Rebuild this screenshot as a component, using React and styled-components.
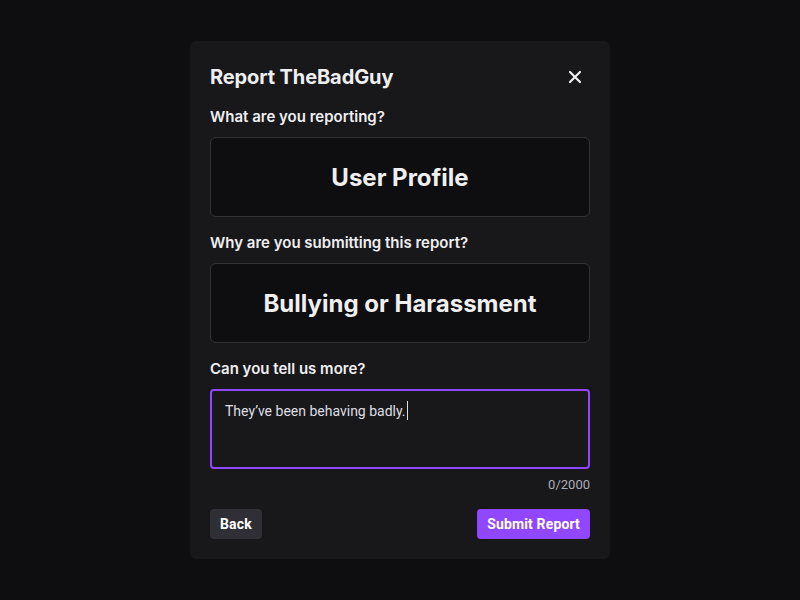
import React from "react";
import styled, { createGlobalStyle } from "styled-components";

const Global = createGlobalStyle`
  html, body { margin: 0; padding: 0; background: #0e0e10; }
  body { font-family: Inter, "Noto Sans", sans-serif; color: #efeff1; }
  * { box-sizing: border-box; }
`;

const Page = styled.div`
  width: 800px;
  height: 600px;
  display: flex;
  justify-content: center;
  align-items: flex-start;
  padding-top: 41px;
`;

const Modal = styled.div`
  width: 420px;
  background: #18181b;
  border-radius: 6px;
  padding: 20px;
  display: flex;
  flex-direction: column;
`;

const Header = styled.div`
  display: flex;
  align-items: center;
  justify-content: space-between;
  height: 31px;
  padding-top: 1px;
  margin-bottom: 14px;
`;

const Title = styled.h2`
  margin: 0;
  font-size: 20px;
  font-weight: 700;
  letter-spacing: -0.1px;
  color: #efeff1;
`;

const Close = styled.button`
  width: 30px;
  height: 30px;
  border: none;
  background: transparent;
  color: #efeff1;
  display: flex;
  align-items: center;
  justify-content: center;
  padding: 0;
`;

const Label = styled.div`
  font-size: 15px;
  font-weight: 600;
  line-height: 20px;
  padding-top: 1px;
  margin-bottom: 10px;
  color: #efeff1;
`;

const Choice = styled.div`
  flex-shrink: 0;
  height: 80px;
  background: #0e0e10;
  border: 1px solid #323237;
  border-radius: 6px;
  display: flex;
  align-items: center;
  justify-content: center;
  font-size: 24px;
  font-weight: 700;
  color: #efeff1;
  margin-bottom: 15px;
`;

const TextArea = styled.div`
  flex-shrink: 0;
  height: 80px;
  background: #18181b;
  border: 2px solid #9147ff;
  border-radius: 4px;
  padding: 10px 13px;
  font-family: Roboto, "Noto Sans", sans-serif;
  font-size: 14px;
  line-height: 18px;
  color: #dedee3;
`;

const Caret = styled.span`
  display: inline-block;
  width: 1px;
  height: 19px;
  background: #dedee3;
  vertical-align: -4px;
  margin-left: 1px;
`;

const Counter = styled.div`
  text-align: right;
  font-family: Roboto, "Noto Sans", sans-serif;
  font-size: 13px;
  line-height: 16px;
  color: #adadb8;
  margin-top: 8px;
`;

const Footer = styled.div`
  display: flex;
  justify-content: space-between;
  margin-top: 16px;
`;

const Button = styled.button`
  height: 30px;
  padding: 0 10px;
  border: none;
  border-radius: 4px;
  font-family: Roboto, "Noto Sans", sans-serif;
  font-size: 14px;
  font-weight: 700;
  letter-spacing: 0.15px;
  color: #ffffff;
  background: ${p => (p.$primary ? "#9147ff" : "#2f2f35")};
`;

export default function App() {
  return (
    <>
      <Global />
      <Page>
        <Modal>
          <Header>
            <Title>Report TheBadGuy</Title>
            <Close aria-label="Close">
              <svg width="14" height="14" viewBox="0 0 14 14">
                <path d="M2 2L12 12M12 2L2 12" stroke="#efeff1" strokeWidth="2.2" strokeLinecap="round" />
              </svg>
            </Close>
          </Header>
          <Label>What are you reporting?</Label>
          <Choice>User Profile</Choice>
          <Label>Why are you submitting this report?</Label>
          <Choice>Bullying or Harassment</Choice>
          <Label>Can you tell us more?</Label>
          <TextArea>
            They’ve been behaving badly.<Caret />
          </TextArea>
          <Counter>0/2000</Counter>
          <Footer>
            <Button>Back</Button>
            <Button $primary>Submit Report</Button>
          </Footer>
        </Modal>
      </Page>
    </>
  );
}
